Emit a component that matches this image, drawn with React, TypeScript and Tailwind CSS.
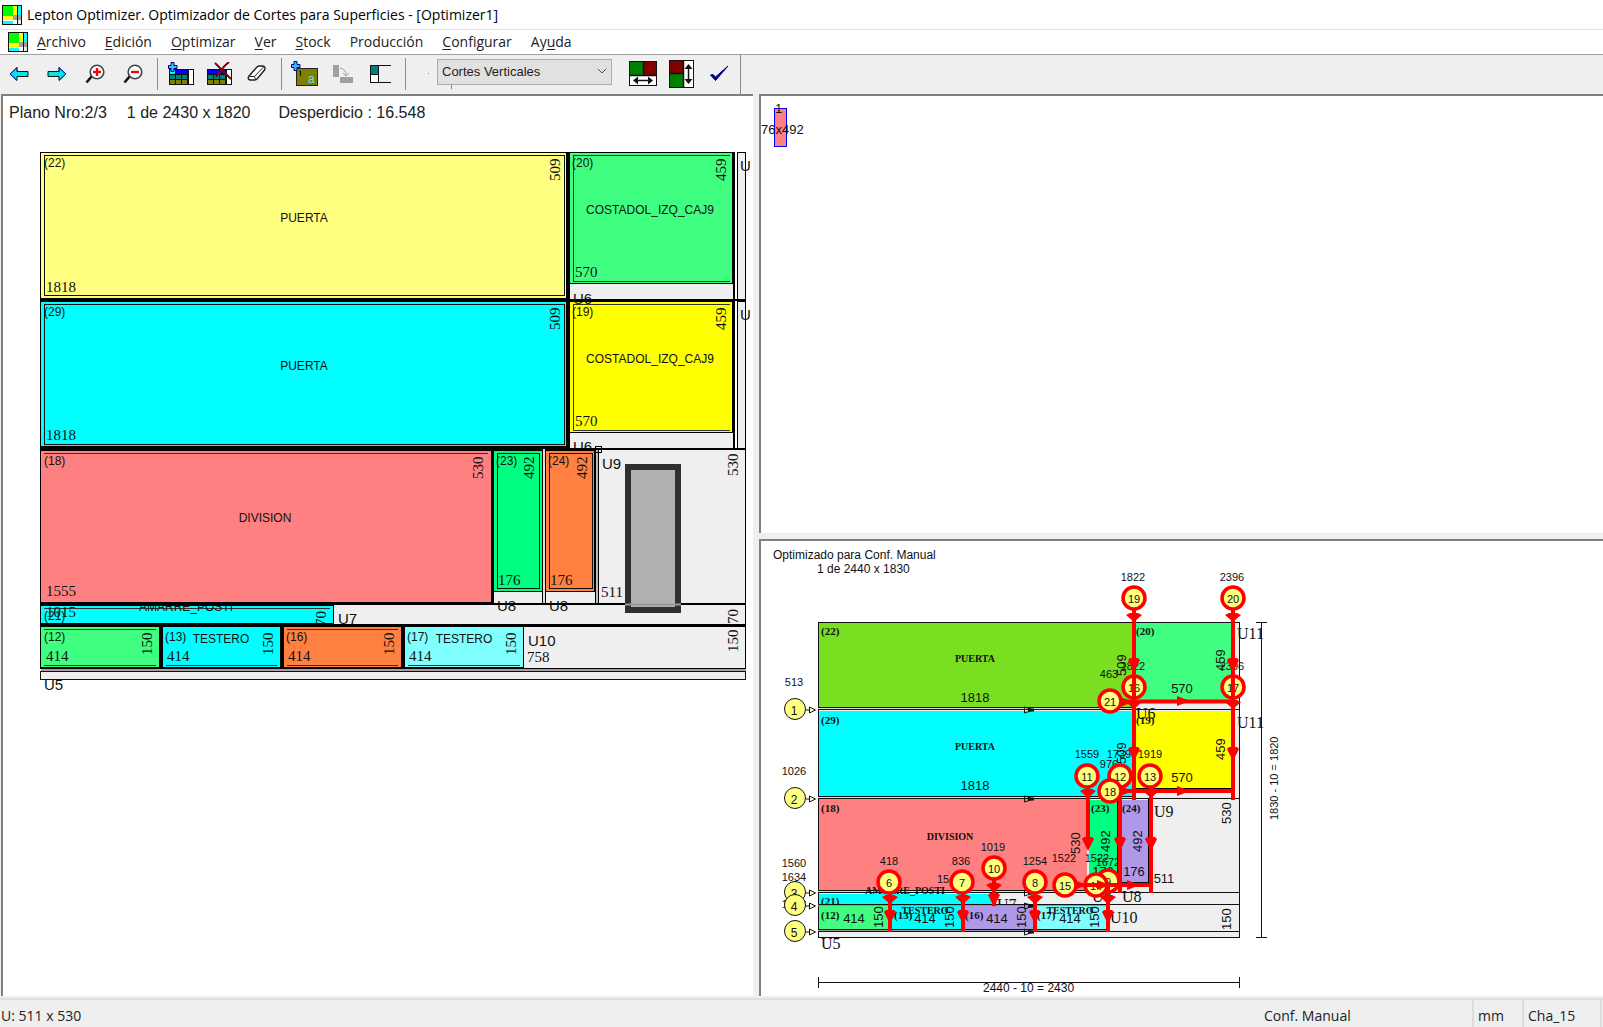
import type { ReactNode } from 'react';
import { ChevronDown } from 'lucide-react';

type Box = { x: number; y: number; w: number; h: number; fill: string; stroke?: string };
type Label = { x: number; y: number; text: string };

const INK = '#111111';
const SCRAP = '#efefef';

const menuItems = [
  { before: '', key: 'A', after: 'rchivo' },
  { before: '', key: 'E', after: 'dición' },
  { before: '', key: 'O', after: 'ptimizar' },
  { before: '', key: 'V', after: 'er' },
  { before: '', key: 'S', after: 'tock' },
  { before: 'Producción', key: '', after: '' },
  { before: '', key: 'C', after: 'onfigurar' },
  { before: 'Ay', key: 'u', after: 'da' },
];

function Logo() {
  return (
    <svg width="20" height="20" viewBox="0 0 20 20" shapeRendering="crispEdges" aria-hidden="true">
      <rect width="20" height="20" fill="#111" />
      <rect x="1" y="1" width="10" height="10" fill="#00ff00" />
      <rect x="11" y="1" width="4" height="10" fill="#ffff00" />
      <rect x="1" y="11" width="10" height="4" fill="#ffff00" />
      <rect x="1" y="15" width="10" height="4" fill="#00ffff" />
      <rect x="11" y="10" width="4" height="5" fill="#a0a0a0" />
      <rect x="11" y="15" width="4" height="4" fill="#fff" />
      <rect x="16" y="1" width="3" height="9" fill="#00ffff" />
      <rect x="16" y="10" width="3" height="5" fill="#a0a0a0" />
      <rect x="16" y="15" width="3" height="4" fill="#e8e8e8" />
      <path d="M1 15.500h10" stroke="#fff" />
    </svg>
  );
}

function ArrowIcon({ flip = false }: { flip?: boolean }) {
  return (
    <svg width="20" height="16" viewBox="0 0 20 16" aria-hidden="true">
      <g transform={flip ? 'translate(20 0) scale(-1 1)' : undefined}>
        <path d="M1 8L8 1.500V5.500H19V10.500H8V14.500Z" fill="#00e5e5" stroke="#111" />
        <path d="M1 8L8 1.500V5.500M1 8L8 14.500" fill="none" stroke="#2222dd" />
      </g>
    </svg>
  );
}

function LensIcon({ plus = false }: { plus?: boolean }) {
  return (
    <svg width="20" height="20" viewBox="0 0 20 20" aria-hidden="true">
      <path d="M1.500 18.500L7 12" stroke="#111" strokeWidth="2.600" />
      <circle cx="12" cy="8" r="6.800" fill="#fff" stroke="#444" strokeWidth="1.600" />
      <path d="M8 8H16" stroke="#ff0000" strokeWidth="2.400" />
      {plus && <path d="M12 4V12" stroke="#ff0000" strokeWidth="2.400" />}
    </svg>
  );
}

function PlusMark() {
  return <path d="M3 0.500h3v3h3v3H6v3H3v-3H0.500v-3H3z" fill="#39b6ff" stroke="#000080" />;
}

function TableIcon({ remove = false }: { remove?: boolean }) {
  return (
    <svg width="26" height="24" viewBox="0 0 26 24" aria-hidden="true">
      <g shapeRendering="crispEdges">
        <rect x="1" y="7" width="25" height="16" fill="#111" />
        <path d="M2 8h5v4H2zM8 8h5v4H8zM14 8h5v4h-5z" fill="#0000ff" />
        <path d="M2 13h5v4H2zM8 13h5v4H8zM14 13h5v4h-5z" fill="#008080" />
        <path d="M2 18h5v4H2zM8 18h5v4H8zM14 18h5v4h-5z" fill="#808000" />
        <path d="M21 8h4v14h-4z" fill="#fff" />
        {!remove && <path d="M2 8h5v4H2z" fill="#00ffff" />}
      </g>
      {remove ? (
        <path d="M9 1L25 17M23 0C18 4 14 9 10 15" fill="none" stroke="#800000" strokeWidth="2" />
      ) : (
        <PlusMark />
      )}
    </svg>
  );
}

function EraserIcon() {
  return (
    <svg width="20" height="18" viewBox="0 0 20 18" aria-hidden="true">
      <path d="M2 11L10 2Q11 1 13 1H16Q19 2 17.500 5L10 14Q9 15 7 15H3Q0 14 2 11Z" fill="#fff" stroke="#222" strokeWidth="1.400" />
      <path d="M2.500 11.500H7.500L16.500 2M7.500 11.500L8.500 14.500" fill="none" stroke="#222" />
    </svg>
  );
}

function BoardIcon() {
  return (
    <svg width="28" height="26" viewBox="0 0 28 26" aria-hidden="true">
      <rect x="5.500" y="7.500" width="21" height="17" fill="#808000" stroke="#222" />
      <PlusMark />
      <path d="M8 11l1.500-1v5" fill="none" stroke="#111" />
      <text x="17" y="22" className="fill-cyan-300 font-['Liberation_Sans'] text-xs">a</text>
    </svg>
  );
}

function RotateIcon() {
  return (
    <svg width="20" height="20" viewBox="0 0 20 20" aria-hidden="true">
      <path d="M0 1h6v12H0zM7 13h13v6H7z" fill="#a0a0a0" />
      <path d="M7 4Q13 5 13 11M10 9l3 3 3-3" fill="none" stroke="#a0a0a0" />
    </svg>
  );
}

function PaneIcon() {
  return (
    <svg width="22" height="18" viewBox="0 0 22 18" shapeRendering="crispEdges" aria-hidden="true">
      <rect x="0.500" y="0.500" width="20" height="17" fill="#fff" stroke="#111" />
      <rect x="1" y="1" width="7" height="8" fill="#008080" />
      <rect x="9" y="1" width="12" height="16" fill="#efefef" />
      <path d="M8.500 0v18M0 9.500h8" stroke="#111" />
    </svg>
  );
}

function HorizontalIcon() {
  return (
    <svg width="28" height="25" viewBox="0 0 28 25" aria-hidden="true">
      <rect x="0.500" y="0.500" width="27" height="24" fill="#fff" stroke="#111" />
      <path d="M1 1h13v13H1z" fill="#008000" />
      <path d="M15 1h12v13H15z" fill="#800000" />
      <path d="M14.500 0v14M0 14.500h28M6 19.500h16" stroke="#111" strokeWidth="1.500" />
      <path d="M4 19.500l5-4v8zM24 19.500l-5-4v8z" fill="#111" />
    </svg>
  );
}

function VerticalIcon() {
  return (
    <svg width="25" height="28" viewBox="0 0 25 28" aria-hidden="true">
      <rect x="0.500" y="0.500" width="24" height="27" fill="#fff" stroke="#111" />
      <path d="M1 1h13v12H1z" fill="#800000" />
      <path d="M1 14h13v13H1z" fill="#008000" />
      <path d="M14.500 0v28M0 13.500h14M19.500 7v14" stroke="#111" strokeWidth="1.500" />
      <path d="M19.500 4l-4 5h8zM19.500 24l-4-5h8z" fill="#111" />
    </svg>
  );
}

function CheckIcon() {
  return (
    <svg width="20" height="18" viewBox="0 0 20 18" aria-hidden="true">
      <path d="M1.500 10L4 9.500L6.500 12L19 1L6.500 15.500Z" fill="#000080" stroke="#000080" strokeLinejoin="round" />
    </svg>
  );
}

function ToolButton({ label, children }: { label: string; children: ReactNode }) {
  return (
    <button type="button" aria-label={label} className="flex h-9 w-[38px] shrink-0 items-center justify-center hover:bg-gray-200">
      {children}
    </button>
  );
}

function Divider() {
  return <div className="ml-[5px] mr-1 h-8 w-px shrink-0 bg-[#8a8a8a]" />;
}

function Boxes({ items }: { items: Box[] }) {
  return (
    <g shapeRendering="crispEdges">
      {items.map((b, i) => (
        <rect
          key={i}
          x={b.stroke ? b.x + 0.5 : b.x}
          y={b.stroke ? b.y + 0.5 : b.y}
          width={b.stroke ? b.w - 1 : b.w}
          height={b.stroke ? b.h - 1 : b.h}
          fill={b.fill}
          stroke={b.stroke}
        />
      ))}
    </g>
  );
}

function Labels({ items, className, anchor = 'start' }: { items: Label[]; className?: string; anchor?: 'start' | 'middle' }) {
  return (
    <g className={className} fill={INK} textAnchor={anchor}>
      {items.map((t, i) => (
        <text key={i} x={t.x} y={t.y}>{t.text}</text>
      ))}
    </g>
  );
}

// x, y is the foot of the rotated text
function SideLabels({ items, className }: { items: Label[]; className: string }) {
  return (
    <g className={className} fill={INK}>
      {items.map((t, i) => (
        <text key={i} transform={`translate(${t.x} ${t.y}) rotate(-90)`}>{t.text}</text>
      ))}
    </g>
  );
}

const planBoxes: Box[] = [
  // first and second strips
  { x: 40, y: 152, w: 706, h: 299, fill: '#000' },
  { x: 41, y: 153, w: 525, h: 145, fill: '#ffff80' },
  { x: 44, y: 155, w: 521, h: 141, fill: 'none', stroke: INK },
  { x: 570, y: 153, w: 162, h: 130, fill: '#40ff80' },
  { x: 570, y: 284, w: 163, h: 15, fill: SCRAP },
  { x: 735, y: 152, w: 2, h: 147, fill: '#fff' },
  { x: 738, y: 153, w: 7, h: 146, fill: SCRAP },
  { x: 41, y: 302, w: 525, h: 144, fill: '#00ffff' },
  { x: 44, y: 304, w: 521, h: 141, fill: 'none', stroke: INK },
  { x: 570, y: 302, w: 162, h: 130, fill: '#ffff00' },
  { x: 570, y: 433, w: 163, h: 15, fill: SCRAP },
  { x: 735, y: 301, w: 2, h: 147, fill: '#fff' },
  { x: 738, y: 302, w: 7, h: 146, fill: SCRAP },
  // third strip
  { x: 40, y: 449, w: 706, h: 156, fill: '#000' },
  { x: 41, y: 451, w: 450, h: 151, fill: '#ff8080' },
  { x: 494, y: 451, w: 48, h: 140, fill: '#00ff80' },
  { x: 497, y: 453, w: 43, h: 136, fill: 'none', stroke: INK },
  { x: 494, y: 592, w: 48, h: 11, fill: SCRAP },
  { x: 543, y: 449, w: 2, h: 154, fill: '#ddd' },
  { x: 546, y: 451, w: 48, h: 140, fill: '#ff8040' },
  { x: 549, y: 453, w: 44, h: 136, fill: 'none', stroke: INK },
  { x: 546, y: 592, w: 49, h: 11, fill: SCRAP },
  { x: 596, y: 450, w: 2, h: 153, fill: '#bbb' },
  { x: 599, y: 450, w: 146, h: 153, fill: SCRAP },
  // fourth strip
  { x: 40, y: 603, w: 706, h: 24, fill: '#000' },
  { x: 41, y: 606, w: 292, h: 17, fill: '#00ffff' },
  { x: 334, y: 605, w: 411, h: 19, fill: SCRAP },
  // fifth strip and bottom offcut
  { x: 40, y: 626, w: 706, h: 43, fill: '#000' },
  { x: 41, y: 627, w: 118, h: 40, fill: '#40ff80' },
  { x: 163, y: 627, w: 117, h: 40, fill: '#00ffff' },
  { x: 284, y: 627, w: 117, h: 40, fill: '#ff8040' },
  { x: 405, y: 627, w: 118, h: 40, fill: '#80ffff' },
  { x: 524, y: 627, w: 221, h: 41, fill: SCRAP },
  { x: 41, y: 669, w: 705, h: 2, fill: '#a8a0a8' },
  { x: 40, y: 671, w: 706, h: 9, fill: SCRAP, stroke: INK },
];

function PlanDrawing() {
  return (
    <svg width="750" height="600" viewBox="3 125 750 600" className="block max-w-none" role="img" aria-label="Plano de corte 2/3">
      <defs>
        <clipPath id="strip4"><rect x="41" y="605" width="704" height="18" /></clipPath>
        <clipPath id="row2"><rect x="40" y="302" width="713" height="147" /></clipPath>
      </defs>
      <Boxes items={planBoxes} />
      <g stroke="#333" fill="none" shapeRendering="crispEdges">
        <path d="M730 155.500H573.500V281.500H730M730 304.500H573.500V430.500H730" />
        <path d="M44 453.500H488M44 608.500H330" />
        <path d="M44 629.500H156M44 665.500H156M166 665.500H277M287 629.500H398M287 665.500H398M408 665.500H520" />
        <path d="M595.500 446.500h6v6h-6z" stroke="#000" />
      </g>
      <rect x="628" y="467" width="50" height="143" fill="#b0b0b0" stroke="#2f2f2f" strokeWidth="6" />
      <path d="M599 604H625M681 604H745" stroke="#000" strokeWidth="2" />
      <path d="M625 604.500H681" stroke="#999" strokeWidth="2" />

      <Labels
        className="font-['Liberation_Sans'] text-xs"
        items={[
          { x: 44, y: 167, text: '(22)' },
          { x: 44, y: 316, text: '(29)' },
          { x: 572, y: 167, text: '(20)' },
          { x: 572, y: 316, text: '(19)' },
          { x: 44, y: 465, text: '(18)' },
          { x: 496, y: 465, text: '(23)' },
          { x: 548, y: 465, text: '(24)' },
          { x: 44, y: 641, text: '(12)' },
          { x: 165, y: 641, text: '(13)' },
          { x: 286, y: 641, text: '(16)' },
          { x: 407, y: 641, text: '(17)' },
        ]}
      />
      <Labels
        anchor="middle"
        className="font-['Liberation_Sans'] text-xs"
        items={[
          { x: 304, y: 222, text: 'PUERTA' },
          { x: 304, y: 370, text: 'PUERTA' },
          { x: 650, y: 214, text: 'COSTADOL_IZQ_CAJ9' },
          { x: 650, y: 363, text: 'COSTADOL_IZQ_CAJ9' },
          { x: 265, y: 522, text: 'DIVISION' },
          { x: 221, y: 643, text: 'TESTERO' },
          { x: 464, y: 643, text: 'TESTERO' },
        ]}
      />
      <Labels
        className="font-['Liberation_Serif'] text-[15px]"
        items={[
          { x: 46, y: 292, text: '1818' },
          { x: 46, y: 440, text: '1818' },
          { x: 575, y: 277, text: '570' },
          { x: 575, y: 426, text: '570' },
          { x: 46, y: 596, text: '1555' },
          { x: 498, y: 585, text: '176' },
          { x: 550, y: 585, text: '176' },
          { x: 601, y: 597, text: '511' },
          { x: 46, y: 661, text: '414' },
          { x: 167, y: 661, text: '414' },
          { x: 288, y: 661, text: '414' },
          { x: 409, y: 661, text: '414' },
          { x: 527, y: 662, text: '758' },
        ]}
      />
      <SideLabels
        className="font-['Liberation_Serif'] text-[15px]"
        items={[
          { x: 560, y: 181, text: '509' },
          { x: 560, y: 330, text: '509' },
          { x: 726, y: 181, text: '459' },
          { x: 726, y: 330, text: '459' },
          { x: 483, y: 479, text: '530' },
          { x: 534, y: 479, text: '492' },
          { x: 587, y: 479, text: '492' },
          { x: 738, y: 476, text: '530' },
          { x: 738, y: 624, text: '70' },
          { x: 152, y: 655, text: '150' },
          { x: 273, y: 655, text: '150' },
          { x: 394, y: 655, text: '150' },
          { x: 516, y: 655, text: '150' },
          { x: 738, y: 652, text: '150' },
        ]}
      />
      <g clipPath="url(#strip4)">
        <Labels
          className="font-['Liberation_Sans'] text-xs"
          items={[{ x: 44, y: 620, text: '(21)' }, { x: 139, y: 611, text: 'AMARRE_POSTI' }]}
        />
        <Labels className="font-['Liberation_Serif'] text-[15px]" items={[{ x: 46, y: 617, text: '1015' }]} />
        <SideLabels className="font-['Liberation_Serif'] text-[15px]" items={[{ x: 326, y: 626, text: '70' }]} />
      </g>
      <g clipPath="url(#row2)">
        <Labels className="font-['Liberation_Sans'] text-[15px]" items={[{ x: 573, y: 452, text: 'U6' }]} />
      </g>
      <Labels
        className="font-['Liberation_Sans'] text-[15px]"
        items={[
          { x: 573, y: 304, text: 'U6' },
          { x: 740, y: 171, text: 'U' },
          { x: 740, y: 320, text: 'U' },
          { x: 602, y: 469, text: 'U9' },
          { x: 497, y: 611, text: 'U8' },
          { x: 549, y: 611, text: 'U8' },
          { x: 338, y: 624, text: 'U7' },
          { x: 528, y: 646, text: 'U10' },
          { x: 44, y: 690, text: 'U5' },
        ]}
      />
    </svg>
  );
}

const sheetBoxes: Box[] = [
  { x: 818, y: 622, w: 422, h: 316, fill: SCRAP, stroke: INK },
  { x: 819, y: 623, w: 315, h: 84, fill: '#7ade21' },
  { x: 1135, y: 623, w: 97, h: 77, fill: '#40ff80' },
  { x: 819, y: 711, w: 315, h: 85, fill: '#00ffff' },
  { x: 1136, y: 711, w: 96, h: 78, fill: '#ffff00' },
  { x: 819, y: 799, w: 268, h: 91, fill: '#ff8080' },
  { x: 1089, y: 800, w: 28, h: 82, fill: '#00ff80' },
  { x: 1121, y: 800, w: 27, h: 82, fill: '#b098e8' },
  { x: 819, y: 894, w: 173, h: 10, fill: '#00ffff' },
  { x: 819, y: 906, w: 71, h: 23, fill: '#40ff80' },
  { x: 890, y: 906, w: 71, h: 23, fill: '#00ffff' },
  { x: 963, y: 906, w: 71, h: 23, fill: '#b098e8' },
  { x: 1034, y: 906, w: 72, h: 23, fill: '#80ffff' },
];

const sheetLines =
  'M818 707.500H1134M818 709.500H1240M818 796.500H1134M818 798.500H1240M818 890.500H1090M818 892.500H1240M818 904.500H1240M818 929.500H1106M818 931.500H1240M1117.500 799V885M1119.500 799V885M1121 882.500H1148M1136 789.500H1232M961.500 905V929M1033.500 905V929M1106.500 905V929';

const horizontalCuts = [
  { n: '1', y: 709 },
  { n: '2', y: 798 },
  { n: '3', y: 892 },
  { n: '4', y: 905 },
  { n: '5', y: 931 },
];

const lateCuts = [
  { n: '19', x: 1134, y: 598 },
  { n: '20', x: 1233, y: 598 },
  { n: '21', x: 1110, y: 701 },
  { n: '11', x: 1087, y: 776 },
  { n: '12', x: 1120, y: 776 },
  { n: '13', x: 1150, y: 776 },
  { n: '18', x: 1110, y: 791 },
  { n: '6', x: 889, y: 882 },
  { n: '7', x: 962, y: 882 },
  { n: '10', x: 994, y: 868 },
  { n: '8', x: 1035, y: 882 },
  { n: '15', x: 1065, y: 885 },
];

// tips of the red arrow heads that point down
const downHeads = [
  [1134, 622], [1233, 622], [1134, 709], [1233, 709], [1088, 798], [1151, 798],
  [890, 904], [963, 904], [994, 892], [1035, 904], [1108, 904],
];
const downMarks = [
  [1134, 672], [1233, 672], [1134, 761], [1233, 761], [1088, 851], [1120, 851], [1151, 851],
  [890, 924], [963, 924], [994, 907], [1035, 924], [1108, 924],
];
const rightMarks = [[1190, 701], [1133, 702], [1190, 791], [1133, 791], [1087, 885], [1110, 885], [1140, 885]];

function CutBadge({ n, x, y }: { n: string; x: number; y: number }) {
  return (
    <g>
      <circle cx={x} cy={y} r="11" fill="#ffff80" stroke="#ff0000" strokeWidth="3.500" />
      <text x={x} y={y + 5} textAnchor="middle" fill={INK}>{n}</text>
    </g>
  );
}

function SheetDrawing() {
  return (
    <svg width="560" height="452" viewBox="761 541 560 452" className="block max-w-none" role="img" aria-label="Secuencia de cortes">
      <defs>
        <clipPath id="thinStrip"><rect x="818" y="880" width="422" height="25" /></clipPath>
      </defs>
      <Labels
        className="font-['Liberation_Sans'] text-xs"
        items={[
          { x: 773, y: 559, text: 'Optimizado para Conf. Manual' },
          { x: 817, y: 573, text: '1 de 2440 x 1830' },
        ]}
      />
      <Boxes items={sheetBoxes} />
      <g shapeRendering="crispEdges">
        <path d={sheetLines} stroke={INK} fill="none" />
        <path d="M1232 623V708M1232 710V790M1149 799V884M1136 789H1232" stroke="#000" strokeWidth="3" />
        <path d="M818 708.500H1134M818 797.500H1134M818 891.500H1090" stroke="#ddd" />
        <path d="M818 930.500H1106M818 905.500H1106" stroke="#999" />
      </g>

      <Labels
        className="font-['Liberation_Serif'] text-[11px] font-bold"
        items={[
          { x: 821, y: 635, text: '(22)' },
          { x: 821, y: 724, text: '(29)' },
          { x: 821, y: 812, text: '(18)' },
          { x: 1136, y: 635, text: '(20)' },
          { x: 1136, y: 724, text: '(19)' },
          { x: 1091, y: 812, text: '(23)' },
          { x: 1122, y: 812, text: '(24)' },
          { x: 821, y: 919, text: '(12)' },
          { x: 894, y: 919, text: '(13)' },
          { x: 965, y: 919, text: '(16)' },
          { x: 1037, y: 919, text: '(17)' },
        ]}
      />
      <Labels
        anchor="middle"
        className="font-['Liberation_Serif'] text-[10px] font-bold"
        items={[
          { x: 975, y: 662, text: 'PUERTA' },
          { x: 975, y: 750, text: 'PUERTA' },
          { x: 950, y: 840, text: 'DIVISION' },
          { x: 905, y: 894, text: 'AMARRE_POSTI' },
          { x: 925, y: 914, text: 'TESTERO' },
          { x: 1070, y: 914, text: 'TESTERO' },
        ]}
      />
      <g clipPath="url(#thinStrip)">
        <Labels className="font-['Liberation_Serif'] text-[11px] font-bold" items={[{ x: 821, y: 905, text: '(21)' }]} />
        <Labels className="font-['Liberation_Serif'] text-base" items={[{ x: 997, y: 910, text: 'U7' }]} />
      </g>
      <Labels
        anchor="middle"
        className="font-['Liberation_Sans'] text-[13px]"
        items={[
          { x: 975, y: 702, text: '1818' },
          { x: 975, y: 790, text: '1818' },
          { x: 1182, y: 693, text: '570' },
          { x: 1182, y: 782, text: '570' },
          { x: 1134, y: 876, text: '176' },
          { x: 1103, y: 876, text: '176' },
          { x: 1164, y: 883, text: '511' },
          { x: 854, y: 923, text: '414' },
          { x: 925, y: 923, text: '414' },
          { x: 997, y: 923, text: '414' },
          { x: 1070, y: 923, text: '414' },
        ]}
      />
      <SideLabels
        className="font-['Liberation_Sans'] text-[13px]"
        items={[
          { x: 1126, y: 676, text: '509' },
          { x: 1126, y: 764, text: '509' },
          { x: 1225, y: 671, text: '459' },
          { x: 1225, y: 760, text: '459' },
          { x: 1080, y: 854, text: '530' },
          { x: 1110, y: 852, text: '492' },
          { x: 1142, y: 852, text: '492' },
          { x: 1231, y: 824, text: '530' },
          { x: 1231, y: 930, text: '150' },
          { x: 883, y: 928, text: '150' },
          { x: 954, y: 928, text: '150' },
          { x: 1026, y: 928, text: '150' },
          { x: 1099, y: 928, text: '150' },
        ]}
      />
      <Labels
        className="font-['Liberation_Serif'] text-base"
        items={[
          { x: 1136, y: 719, text: 'U6' },
          { x: 1237, y: 639, text: 'U11' },
          { x: 1237, y: 728, text: 'U11' },
          { x: 1154, y: 817, text: 'U9' },
          { x: 1092, y: 902, text: 'U8' },
          { x: 1122, y: 902, text: 'U8' },
          { x: 1110, y: 923, text: 'U10' },
          { x: 821, y: 949, text: 'U5' },
        ]}
      />
      <Labels
        anchor="middle"
        className="font-['Liberation_Sans'] text-[11px]"
        items={[
          { x: 794, y: 686, text: '513' },
          { x: 794, y: 775, text: '1026' },
          { x: 794, y: 867, text: '1560' },
          { x: 794, y: 881, text: '1634' },
          { x: 794, y: 908, text: '1788' },
          { x: 1133, y: 581, text: '1822' },
          { x: 1232, y: 581, text: '2396' },
          { x: 1109, y: 678, text: '463' },
          { x: 1133, y: 670, text: '1822' },
          { x: 1232, y: 670, text: '2396' },
          { x: 1087, y: 758, text: '1559' },
          { x: 1119, y: 758, text: '1739' },
          { x: 1150, y: 758, text: '1919' },
          { x: 1109, y: 768, text: '976' },
          { x: 1064, y: 862, text: '1522' },
          { x: 1097, y: 862, text: '1522' },
          { x: 1108, y: 866, text: '1672' },
          { x: 1035, y: 865, text: '1254' },
          { x: 961, y: 865, text: '836' },
          { x: 889, y: 865, text: '418' },
          { x: 993, y: 851, text: '1019' },
          { x: 943, y: 883, text: '15' },
        ]}
      />

      <g className="font-['Liberation_Sans'] text-[11px]">
        <g className="text-xs">
          {horizontalCuts.map((cut) => (
            <g key={cut.n} stroke={INK}>
              <circle cx="795" cy={cut.y} r="10.500" fill="#ffff80" />
              <path d={`M806 ${cut.y + 1}H809M809.500 ${cut.y - 2}l6 3l-6 3z`} fill="#ffffc0" />
              <path d={`M1024.500 ${cut.y - 2}l9 3l-9 3z`} fill="none" />
              <path d={`M1028 ${cut.y + 1}h6`} strokeWidth="3" />
              <text x="794" y={cut.y + 6} textAnchor="middle" stroke="none" fill={INK}>{cut.n}</text>
            </g>
          ))}
        </g>
        <CutBadge n="16" x={1134} y={687} />
        <CutBadge n="17" x={1233} y={687} />
        <CutBadge n="9" x={1108} y={881} />
        <CutBadge n="14" x={1096} y={885} />
        <path
          d="M1134 609V800M1233 609V800M1122 701.500H1233M1122 791H1235M1088 788V845M1120 790V893M1151 788V893M1076 885H1151M1108 886V932M890 894V932M963 894V932M1035 894V932M994 880V906"
          fill="none"
          stroke="#ff0000"
          strokeWidth="4"
        />
        <g fill="#ff0000">
          {downHeads.map(([x, y]) => <path key={`${x}-${y}`} d={`M${x} ${y}l-8 -7l4 -2h8l4 2z`} />)}
          {downMarks.map(([x, y]) => <path key={`${x}-${y}`} d={`M${x} ${y}l-6 -12l2 -2h8l2 2z`} />)}
          {rightMarks.map(([x, y]) => <path key={`${x}-${y}`} d={`M${x} ${y}l-13 -5v10z`} />)}
        </g>
        {lateCuts.map((cut) => <CutBadge key={cut.n} {...cut} />)}
      </g>

      <g stroke={INK} fill="none" shapeRendering="crispEdges">
        <path d="M1261.500 622V937M1256 622.500h11M1256 937.500h11M818 982.500H1239M818.500 977v11M1239.500 977v11" />
      </g>
      <SideLabels className="font-['Liberation_Sans'] text-[11px]" items={[{ x: 1278, y: 820, text: '1830 - 10 = 1820' }]} />
      <Labels className="font-['Liberation_Sans'] text-xs" items={[{ x: 983, y: 992, text: '2440 - 10 = 2430' }]} />
    </svg>
  );
}

function OffcutDrawing() {
  return (
    <svg width="120" height="70" viewBox="761 96 120 70" className="block" role="img" aria-label="Retal 76x492">
      <rect x="774.500" y="108.500" width="12" height="38" fill="#ff8080" stroke="#0000ff" />
      <Labels className="font-['Liberation_Sans'] text-[13px]" items={[{ x: 775, y: 113, text: '1' }, { x: 761, y: 134, text: '76x492' }]} />
    </svg>
  );
}

const pane = 'min-h-0 min-w-0 overflow-hidden border-l-2 border-t-2 border-[#808080] bg-white';

export default function App() {
  return (
    <div className="flex h-screen flex-col overflow-hidden bg-[#efefef] font-['Open_Sans',sans-serif] text-black">
      <header className="bg-white">
        <div className="flex h-[29px] items-center gap-[5px] px-0.5">
          <Logo />
          <h1 className="text-sm">Lepton Optimizer. Optimizador de Cortes para Superficies - [Optimizer1]</h1>
        </div>
        <nav className="flex h-[26px] items-center border-b border-t border-b-[#a0a0a0] border-t-[#e4e4e4] pl-2 text-sm text-[#222]">
          <Logo />
          <div className="ml-[9px] flex gap-[19px]">
            {menuItems.map((item) => (
              <a key={item.before + item.key + item.after} href="#" className="hover:bg-sky-100">
                {item.before}
                {item.key && <span className="underline underline-offset-2">{item.key}</span>}
                {item.after}
              </a>
            ))}
          </div>
        </nav>
      </header>

      <div className="flex h-[39px] shrink-0 items-center border-r border-transparent">
        <div className="flex items-center pb-0.5">
          <ToolButton label="Anterior"><ArrowIcon /></ToolButton>
          <ToolButton label="Siguiente"><ArrowIcon flip /></ToolButton>
          <ToolButton label="Acercar"><LensIcon plus /></ToolButton>
          <ToolButton label="Alejar"><LensIcon /></ToolButton>
          <Divider />
          <ToolButton label="Agregar piezas"><TableIcon /></ToolButton>
          <ToolButton label="Quitar piezas"><TableIcon remove /></ToolButton>
          <ToolButton label="Borrar"><EraserIcon /></ToolButton>
          <Divider />
          <ToolButton label="Agregar plancha"><BoardIcon /></ToolButton>
          <ToolButton label="Rotar"><RotateIcon /></ToolButton>
          <ToolButton label="Paneles"><PaneIcon /></ToolButton>
          <Divider />
          <div className="ml-[18px] size-px bg-[#8a8a8a]" />
          <div className="relative ml-2 mr-3 w-[175px] shrink-0 pb-1">
            <select
              aria-label="Tipo de corte"
              className="block h-[26px] w-full appearance-none border border-[#adadad] bg-[#e1e1e1] pl-1 font-['Liberation_Sans'] text-[13px] text-[#222]"
            >
              <option>Cortes Verticales</option>
              <option>Cortes Horizontales</option>
            </select>
            <ChevronDown className="pointer-events-none absolute right-0.5 top-1 size-4 text-gray-600" strokeWidth={1.5} />
            <div className="absolute bottom-0 left-3.5 h-1 w-px bg-[#8a8a8a]" />
          </div>
          <ToolButton label="Ajustar ancho"><HorizontalIcon /></ToolButton>
          <ToolButton label="Ajustar alto"><VerticalIcon /></ToolButton>
          <ToolButton label="Aceptar"><CheckIcon /></ToolButton>
        </div>
        <div className="ml-0.5 h-full w-px bg-[#8a8a8a]" />
      </div>

      <main className="ml-px grid min-h-0 flex-1 grid-cols-[471fr_529fr] gap-x-1.5">
        <section className={pane}>
          <p className="flex h-[29px] items-center pl-1.5 pt-1 font-['Liberation_Sans'] text-base text-[#222]">
            <span className="mr-5">Plano Nro:2/3</span>
            <span className="mr-7">1 de 2430 x 1820</span>
            <span>Desperdicio : 16.548</span>
          </p>
          <PlanDrawing />
        </section>
        <div className="grid min-h-0 min-w-0 grid-rows-[49fr_51fr] gap-y-1.5">
          <section className={pane}>
            <OffcutDrawing />
          </section>
          <section className={pane}>
            <SheetDrawing />
          </section>
        </div>
      </main>

      <footer className="mt-0.5 flex h-[29px] shrink-0 items-stretch border-t-2 border-[#dfdfdf] pr-px text-sm text-[#222]">
        <span className="flex flex-1 items-center pl-px pt-1">U: 511 x 530</span>
        <span className="flex w-[208px] items-center pt-1">Conf. Manual</span>
        <span className="flex w-[50px] items-center border-l-2 border-[#dcdcdc] pl-1 pt-1">mm</span>
        <span className="flex w-20 items-center border-x-2 border-[#dcdcdc] pl-1 pt-1">Cha_15</span>
      </footer>
    </div>
  );
}
